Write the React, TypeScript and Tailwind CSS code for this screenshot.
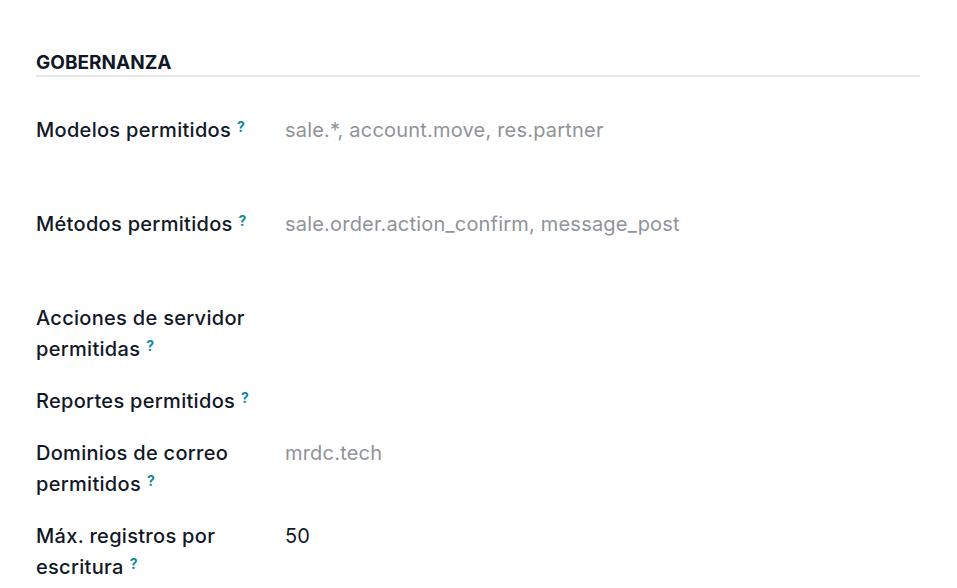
const rows: { label: string[]; value?: string; muted?: boolean; h?: string }[] = [
  { label: ["Modelos permitidos"], value: "sale.*, account.move, res.partner", muted: true, h: "min-h-[73px]" },
  { label: ["Métodos permitidos"], value: "sale.order.action_confirm, message_post", muted: true, h: "min-h-[73px]" },
  { label: ["Acciones de servidor", "permitidas"] },
  { label: ["Reportes permitidos"] },
  { label: ["Dominios de correo", "permitidos"], value: "mrdc.tech", muted: true },
  { label: ["Máx. registros por", "escritura"], value: "50" },
];

function Help() {
  return <sup className="ml-[6px] relative -top-[5px] text-[14px] font-bold text-[#0f87a0]">?</sup>;
}

export default function App() {
  return (
    <div className="w-[957px] h-[588px] overflow-hidden bg-white pl-[36px] pr-[37px] pt-[51px] font-['Inter',sans-serif] text-[#111827]">
      <div className="border-b-2 border-[#e5e7eb] pb-0">
        <h2 className="text-[19px] leading-[24px] font-bold">GOBERNANZA</h2>
      </div>
      <div className="mt-[38px] flex flex-col gap-[21px]">
        {rows.map((r, i) => (
          <div key={i} className={`flex ${r.h ?? ""}`}>
            <div className="w-[249px] shrink-0 text-[20px] leading-[31px] font-medium tracking-[0.3px]">
              {r.label.map((l, j) => (
                <div key={j}>
                  {l}
                  {j === r.label.length - 1 && <Help />}
                </div>
              ))}
            </div>
            {r.value && (
              <div className={`text-[20px] leading-[31px] tracking-[0.2px] ${r.muted ? "text-[#8f9399]" : "text-[#111827]"}`}>{r.value}</div>
            )}
          </div>
        ))}
      </div>
    </div>
  );
}
